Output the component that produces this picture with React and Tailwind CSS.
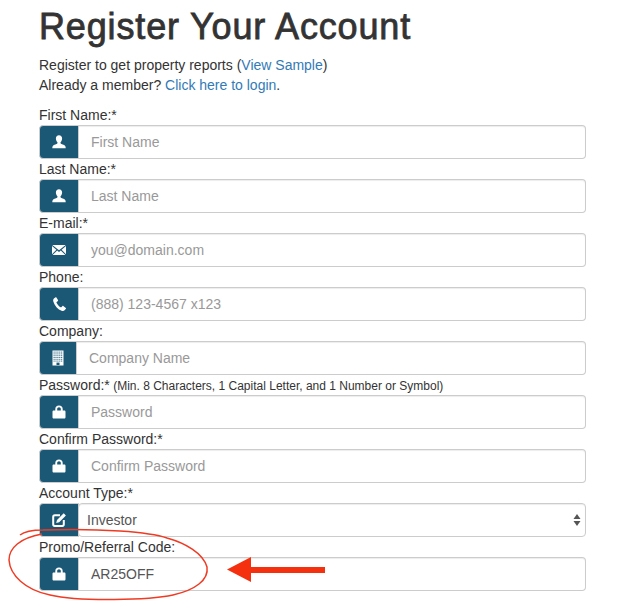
import React from "react";

const Svg = ({ children, w = 16, h = 16, vb = "0 0 16 16" }) => (
  <svg width={w} height={h} viewBox={vb} fill="white">{children}</svg>
);
const User = () => (
  <Svg>
    <path d="M8 1.200c-2 0-3.100 1.500-3.100 3.400 0 1.500.6 2.900 1.500 3.700.2.3.2.9-.1 1.300-.3.5-3.600 1.200-4.500 2.300-.4.5-.5 1.500-.5 2.300h13.400c0-.8-.1-1.800-.5-2.300-.9-1.100-4.200-1.800-4.500-2.300-.3-.4-.3-1-.1-1.300.9-.8 1.500-2.200 1.500-3.700C11.100 2.700 10 1.200 8 1.200z" />
  </Svg>
);
const Mail = () => (
  <Svg>
    <path d="M1.300 3h13.400L8 8.300z" />
    <path d="M1 4l4.400 3.700L1 12.200z" />
    <path d="M15 4l-4.400 3.700L15 12.200z" />
    <path d="M6.200 8.400L8 9.900l1.800-1.500 4.600 4.600H1.600z" />
  </Svg>
);
const Phone = () => (
  <Svg>
    <path d="M4.600 1.300L2.900 2.500c-.8.700-.9 2-.5 3.300.7 2.100 1.800 4 3.300 5.600 1.400 1.500 3 2.600 4.900 3.300 1.200.4 2.300.2 3-.5l1.300-1.500c.2-.3.2-.6-.1-.8l-2.500-1.900c-.3-.2-.6-.2-.8 0l-1.200 1.200c-.2.2-.5.2-.7.100-.9-.6-1.700-1.300-2.400-2.100-.7-.8-1.200-1.600-1.700-2.500-.1-.3 0-.5.200-.7l1.200-1.100c.2-.2.300-.5.100-.8L5.400 1.500c-.2-.3-.5-.4-.8-.2z" />
  </Svg>
);
const Building = () => {
  const cells = [];
  for (let r = 0; r < 6; r++)
    for (let c = 0; c < 5; c++)
      cells.push(<rect key={r + "-" + c} x={3.6 + c * 1.9} y={1.6 + r * 1.8} width="1" height="1" fill="#1a5876" />);
  return (
    <Svg>
      <rect x="2.500" y="0.500" width="11" height="15" />
      {cells}
      <rect x="6.500" y="12.600" width="3" height="2.400" fill="#1a5876" />
    </Svg>
  );
};
const Lock = () => (
  <Svg>
    <path fillRule="evenodd" d="M8 1.500c-2.300 0-3.700 1.400-3.700 3.400v1.600H2.800c-.8 0-1.300.5-1.300 1.300v5.400c0 .8.500 1.300 1.300 1.300h10.400c.8 0 1.300-.5 1.300-1.300V7.800c0-.8-.5-1.300-1.300-1.300h-1.500V4.900c0-2-1.400-3.400-3.700-3.400zm0 1.700c1.100 0 1.800.7 1.800 1.800v1.500H6.200V5c0-1.100.7-1.800 1.800-1.800z" />
  </Svg>
);
const Edit = () => (
  <svg width="16" height="16" viewBox="0 0 16 16" fill="none">
    <path d="M9 3.300H3.800c-1 0-1.600.6-1.600 1.600v7.400c0 1 .6 1.600 1.600 1.600h7.400c1 0 1.600-.6 1.600-1.600V8" stroke="white" strokeWidth="2" />
    <path d="M12.700 1.300l2.200 2.200-6.700 6.700-3 .8.800-3z" fill="white" />
  </svg>
);

const fields = [
  { label: "First Name:*", ph: "First Name", icon: <User /> },
  { label: "Last Name:*", ph: "Last Name", icon: <User /> },
  { label: "E-mail:*", ph: "you@domain.com", icon: <Mail /> },
  { label: "Phone:", ph: "(888) 123-4567 x123", icon: <Phone /> },
  { label: "Company:", ph: "Company Name", icon: <Building />, narrow: true },
  {
    label: "Password:*",
    note: " (Min. 8 Characters, 1 Capital Letter, and 1 Number or Symbol)",
    ph: "Password",
    icon: <Lock />,
  },
  { label: "Confirm Password:*", ph: "Confirm Password", icon: <Lock /> },
  { label: "Account Type:*", select: "Investor", icon: <Edit /> },
  { label: "Promo/Referral Code:", value: "AR25OFF", icon: <Lock /> },
];

function Field({ f }) {
  return (
    <div>
      <div className="h-5 text-[14px] leading-5 text-[#333]">
        {f.label}
        {f.note && <span className="text-[12px]">{f.note}</span>}
      </div>
      <div className="flex h-[34px]">
        <div
          className={
            "flex shrink-0 items-center justify-center rounded-l border border-[#ccc] bg-[#1a5876] " +
            (f.narrow ? "w-[38px]" : "w-[40px]")
          }
        >
          {f.icon}
        </div>
        {f.select ? (
          <div className="-ml-px flex flex-1 items-center justify-between rounded border border-[#ccc] bg-white pl-2 pr-[4px] text-[14px] text-[#555] shadow-[inset_0_1px_1px_rgba(0,0,0,0.075)]">
            <span>{f.select}</span>
            <svg width="8" height="12" viewBox="0 0 8 12" fill="#555">
              <path d="M4 0l3.500 5H.5z" />
              <path d="M4 12L.5 7h7z" />
            </svg>
          </div>
        ) : (
          <input
            readOnly
            placeholder={f.ph}
            value={f.value || ""}
            className="min-w-0 flex-1 rounded-r border border-l-0 border-[#ccc] bg-white px-3 text-[14px] text-[#555] shadow-[inset_0_1px_1px_rgba(0,0,0,0.075)] outline-none placeholder:text-[#999]"
          />
        )}
      </div>
    </div>
  );
}

export default function App() {
  return (
    <div
      className="relative h-[614px] w-[620px] overflow-hidden bg-white pl-[39px] pr-[34px] text-[#333]"
      style={{ fontFamily: '"Liberation Sans", Arial, sans-serif' }}
    >
      <h1 className="pt-[7px] text-[36px] leading-[40px] font-normal tracking-[0.85px] text-[#333] [-webkit-text-stroke:0.8px_#333]">
        Register Your Account
      </h1>
      <p className="mt-2 text-[14px] leading-5">
        Register to get property reports (<span className="text-[#337ab7]">View Sample</span>)
        <br />
        Already a member? <span className="text-[#337ab7]">Click here to login</span>.
      </p>
      <div className="mt-[10px]">
        {fields.map((f) => (
          <Field key={f.label} f={f} />
        ))}
      </div>
      <svg className="pointer-events-none absolute left-0 top-0" width="620" height="614" fill="none">
        <path
          d="M20 535C25 531 35 530 43 530C100 528 150 532 167 538C185 543 203 553 207 567C209 580 195 590 173 595C150 600 80 602 50 595C25 590 10 575 9 560C9 548 20 538 42 534"
          stroke="#ef3b24"
          strokeWidth="1.500"
        />
        <path d="M227 569.500L251 557V567H325V573H251V582z" fill="#f5300f" />
      </svg>
    </div>
  );
}
